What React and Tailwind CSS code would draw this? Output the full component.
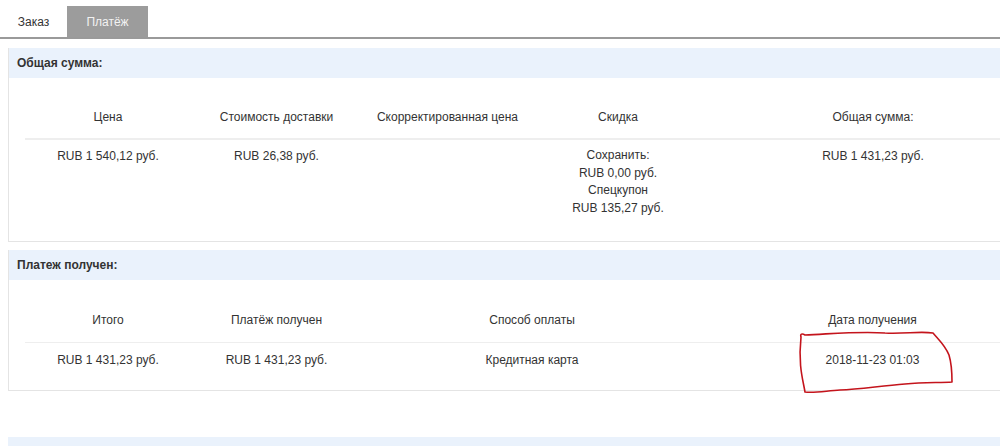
export default function App() {
  const font = { fontFamily: '"Liberation Sans", Arial, sans-serif' };
  return (
    <div className="relative w-full h-[446px] overflow-hidden bg-white text-[12px] text-[#333]" style={font}>
      <div className="w-[1042px]">
        {/* Tabs */}
        <div className="flex pt-[6px] border-b-2 border-[#9a9a9a] h-[39px]">
          <div className="w-[67px] h-[31px] flex items-center justify-center text-[#333]">Заказ</div>
          <div className="w-[81px] h-[31px] flex items-center justify-center bg-[#9c9c9c] text-[#f2f2f2]">Платёж</div>
        </div>

        {/* Panel 1 */}
        <div className="ml-[8px] mt-[9px] border-l border-b border-[#e4e4e4]">
          <div className="h-[30px] bg-[#eaf2fc] flex items-center pl-[8px] font-bold">Общая сумма:</div>
          <div className="pt-[16px] pl-[16px] h-[163px]">
            <div className="grid grid-cols-[166px_171px_171px_170px_340px] text-center">
              <div className="h-[46px] leading-[18px] pt-[14px] border-b-2 border-[#eeeeee]">Цена</div>
              <div className="h-[46px] leading-[18px] pt-[14px] border-b-2 border-[#eeeeee]">Стоимость доставки</div>
              <div className="h-[46px] leading-[18px] pt-[14px] border-b-2 border-[#eeeeee]">Скорректированная цена</div>
              <div className="h-[46px] leading-[18px] pt-[14px] border-b-2 border-[#eeeeee]">Скидка</div>
              <div className="h-[46px] leading-[18px] pt-[14px] border-b-2 border-[#eeeeee]">Общая сумма:</div>
              <div className="pt-[7px] leading-[18px]">RUB 1 540,12 руб.</div>
              <div className="pt-[7px] leading-[18px]">RUB 26,38 руб.</div>
              <div className="pt-[7px] leading-[18px]"></div>
              <div className="pt-[7px] leading-[17.7px]">
                <div>Сохранить:</div>
                <div>RUB 0,00 руб.</div>
                <div>Спецкупон</div>
                <div>RUB 135,27 руб.</div>
              </div>
              <div className="pt-[7px] leading-[18px]">RUB 1 431,23 руб.</div>
            </div>
          </div>
        </div>

        {/* Panel 2 */}
        <div className="ml-[8px] mt-[8px] border-l border-b border-[#e4e4e4]">
          <div className="h-[30px] bg-[#eaf2fc] flex items-center pl-[8px] font-bold">Платеж получен:</div>
          <div className="pt-[17px] pl-[16px] h-[110px]">
            <div className="grid grid-cols-[166px_171px_340px_341px] text-center">
              <div className="h-[46px] leading-[18px] pt-[14px] border-b border-[#eeeeee]">Итого</div>
              <div className="h-[46px] leading-[18px] pt-[14px] border-b border-[#eeeeee]">Платёж получен</div>
              <div className="h-[46px] leading-[18px] pt-[14px] border-b border-[#eeeeee]">Способ оплаты</div>
              <div className="h-[46px] leading-[18px] pt-[14px] border-b border-[#eeeeee]">Дата получения</div>
              <div className="pt-[8px] leading-[18px]">RUB 1 431,23 руб.</div>
              <div className="pt-[8px] leading-[18px]">RUB 1 431,23 руб.</div>
              <div className="pt-[8px] leading-[18px]">Кредитная карта</div>
              <div className="pt-[8px] leading-[18px]">2018-11-23 01:03</div>
            </div>
          </div>
        </div>

        {/* Bottom band */}
        <div className="ml-[8px] mt-[46px] h-[12px] bg-[#eaf2fc]"></div>
      </div>

      {/* Red hand-drawn marking */}
      <svg className="absolute left-[790px] top-[325px]" width="170" height="75" viewBox="0 0 170 75" fill="none">
        <path
          d="M11 12 C 10 9, 12 8, 15 10 C 40 9, 70 6, 95 8 C 115 9, 130 6, 143 8 C 148 14, 155 20, 159 30 C 162 40, 162 50, 162 57 C 150 58, 135 57, 115 59 C 90 61, 70 64, 50 65 C 35 66, 25 68, 15 67 C 13 55, 8 40, 11 12 Z"
          stroke="#c4141c"
          strokeWidth="1.6"
          strokeLinejoin="round"
        />
      </svg>
    </div>
  );
}
